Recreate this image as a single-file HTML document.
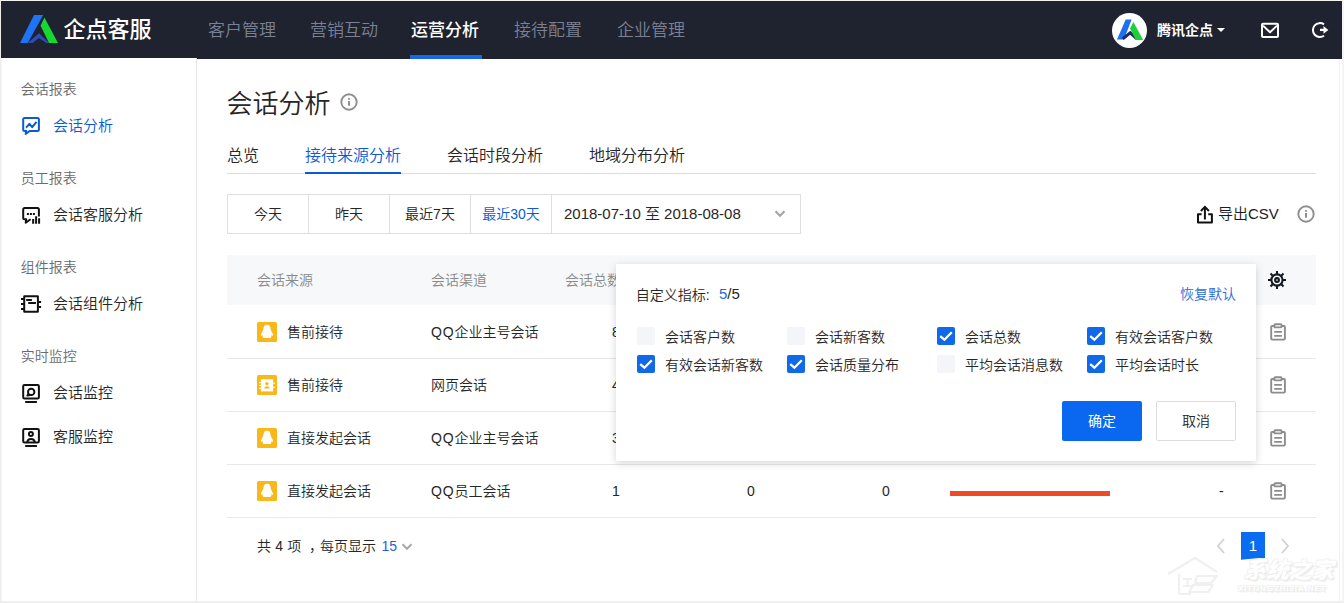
<!DOCTYPE html>
<html lang="zh-CN">
<head>
<meta charset="utf-8">
<title>企点客服 - 会话分析</title>
<style>
*{box-sizing:border-box;margin:0;padding:0}
html,body{width:1344px;height:603px;overflow:hidden;background:#fff}
body{font-family:"Liberation Sans","Noto Sans CJK SC",sans-serif;font-weight:350;color:#333;position:relative;font-size:14px}
.abs{position:absolute;white-space:nowrap}
.t{position:absolute;white-space:nowrap;line-height:20px;height:20px}
#frame{position:absolute;left:0;top:0;width:1344px;height:603px;border-left:1px solid #ececec;border-top:1px solid #f4f4f4;border-bottom:2px solid #efefef;border-right:2px solid #f4f4f4;pointer-events:none;z-index:50}
.wm{position:absolute;white-space:nowrap;color:#fff;font-style:italic;font-weight:900;text-shadow:1px 1px 0 #ebebeb,-1px -1px 0 #f3f3f3,1px -1px 0 #f3f3f3,-1px 1px 0 #efefef,2px 2px 1px #f0f0f0}
#hdr{position:absolute;left:1px;top:1px;width:1341px;height:57.5px;background:#1f2330}
#side{position:absolute;left:1px;top:58px;width:196px;height:543px;border-right:1px solid #e7e7e7;background:#fff}
.nav{position:absolute;top:20px;font-size:17px;line-height:20px;color:#7b8195;white-space:nowrap}
.nav.on{color:#fff;font-weight:500}
.sec{position:absolute;left:19.8px;font-size:14px;color:#6b6b6b;line-height:18px;white-space:nowrap}
.item{position:absolute;left:52px;font-size:15px;color:#262626;line-height:20px;white-space:nowrap}
.item.on{color:#0a5bd3}
.sic{position:absolute;left:21px;width:20px;height:20px}

#main{position:absolute;left:0;top:0;width:1344px;height:603px}
.tab{position:absolute;top:146px;font-size:16px;line-height:20px;color:#262626;white-space:nowrap}
.tab.on{color:#0a5bd3}
.seg{position:absolute;top:194px;height:40px;border:1px solid #dfdfdf;border-left:none;font-size:14px;line-height:38px;text-align:center;color:#262626;white-space:nowrap;background:#fff}
.th{position:absolute;top:270px;font-size:14px;line-height:20px;color:#8a8a8a;white-space:nowrap}
.td{position:absolute;font-size:14px;line-height:20px;color:#262626;white-space:nowrap}
.rl{position:absolute;left:227px;width:1089px;height:1px;background:#e8e8e8}
.qi{position:absolute;left:257px;width:20px;height:20px}
.clip{position:absolute;left:1269px;width:18px;height:20px}
.cb{position:absolute;width:18px;height:18px;border-radius:2px}
.cb.off{background:#f3f5f8}
.cb.onn{background:#0f69e8}
.cl{position:absolute;font-size:14px;line-height:20px;color:#262626;white-space:nowrap}
</style>
</head>
<body>
<div id="hdr">
  <svg class="abs" style="left:0;top:0" width="70" height="57" viewBox="0 0 70 57">
    <polygon points="33,14 42.2,14 26.8,42 19,42" fill="#1f74f5"/>
    <polygon points="26.8,42 38,32.2 48,42 45.5,42 38,37 31.5,42" fill="#2a4dbd"/>
    <polygon points="43.4,16.6 57,42 48,42 39.6,24.7" fill="#17d733"/>
  </svg>
  <div class="abs" style="left:62.5px;top:14px;font-size:22px;line-height:30px;color:#fff;font-weight:500">企点客服</div>
  <div class="nav" style="left:207px">客户管理</div>
  <div class="nav" style="left:309px">营销互动</div>
  <div class="nav on" style="left:410px">运营分析</div>
  <div class="abs" style="left:409.3px;top:54px;width:71.4px;height:3.5px;background:#1268e8"></div>
  <div class="nav" style="left:513px">接待配置</div>
  <div class="nav" style="left:616px">企业管理</div>
  <div class="abs" style="left:1111px;top:12px;width:35px;height:35px;border-radius:50%;background:#fff"></div>
  <svg class="abs" style="left:1111px;top:12px" width="36" height="36" viewBox="0 0 36 36">
    <polygon points="13.7,6.6 19.6,6.6 12,26.4 5,26.4" fill="#1f6ff0"/>
    <path d="M10.8 25.8 L18.2 19.8 L25 26" fill="none" stroke="#1d2c5c" stroke-width="3"/>
    <polygon points="21.4,9 31.2,27 23.8,27 18,15.4" fill="#1fcf3a"/>
  </svg>
  <div class="abs" style="left:1156px;top:19px;font-size:14px;line-height:20px;color:#fff;font-weight:700">腾讯企点</div>
  <div class="abs" style="left:1216px;top:27px;width:0;height:0;border-left:4px solid transparent;border-right:4px solid transparent;border-top:4px solid #fff"></div>
  <svg class="abs" style="left:1259px;top:20px" width="20" height="19" viewBox="0 0 20 19" fill="none" stroke="#fff" stroke-width="2" stroke-linejoin="round"><rect x="2" y="2.7" width="16" height="13.4" rx="1"/><path d="M3 4.6 L10 11.3 L17 4.6"/></svg>
  <svg class="abs" style="left:1309px;top:19px" width="20" height="20" viewBox="0 0 20 20" fill="none" stroke="#fff" stroke-width="2"><path d="M14 4.4 A7 7 0 1 0 14 15.8"/><path d="M10 9.9 H14.5" stroke-width="2.3"/><path d="M13.5 6 L18.3 9.9 L13.5 13.8 Z" fill="#fff" stroke="none"/></svg>
</div>

<div id="side">
  <div class="sec" style="top:22px">会话报表</div>
  <svg class="sic" style="top:58px" viewBox="0 0 20 20" fill="none" stroke="#0a5bd3" stroke-width="2" stroke-linejoin="round" stroke-linecap="round"><path d="M2.7 2 H15.4 Q16.9 2 16.9 3.5 V13.5 Q16.9 15 15.4 15 H7.6 L3.7 18 L4.2 15 H2.7 Q1.2 15 1.2 13.5 V3.5 Q1.2 2 2.7 2 Z"/><path d="M4.1 11.6 L7.4 7.8 L10.2 11.2 L14.5 5.9" stroke-linecap="butt"/></svg>
  <div class="item on" style="top:58px">会话分析</div>

  <div class="sec" style="top:111px">员工报表</div>
  <svg class="sic" style="top:147px" viewBox="0 0 20 20" fill="none" stroke="#111" stroke-width="2" stroke-linejoin="round"><path d="M16.9 11.4 V4.5 Q16.9 3 15.4 3 H2.7 Q1.2 3 1.2 4.5 V12.8 Q1.2 14.3 2.7 14.3 H4.2 L3.7 17.7 L8.6 14.3"/><path d="M4.9 8.9 H6.9 M7.9 8.9 H9.9 M10.9 8.9 H12.9"/><path d="M11.15 18.7 V13.9 M14.1 18.7 V11.2 M17.1 18.7 V13.2"/></svg>
  <div class="item" style="top:147px">会话客服分析</div>

  <div class="sec" style="top:200px">组件报表</div>
  <svg class="sic" style="top:236px;overflow:visible" viewBox="0 0 20 20" fill="none" stroke="#111" stroke-width="2" stroke-linejoin="round"><rect x="2.2" y="2.2" width="13.7" height="15.6" rx="0.3"/><path d="M-1 4.9 H2 M-1 9.9 H2 M-1 14.9 H2 M16 7.9 H19.1 M16 12.9 H19.1 M4.2 5.9 H9.9 M6.2 8.9 H13.9"/></svg>
  <div class="item" style="top:236px">会话组件分析</div>

  <div class="sec" style="top:289px">实时监控</div>
  <svg class="sic" style="top:325px" viewBox="0 0 20 20" fill="none" stroke="#111" stroke-width="2" stroke-linejoin="round"><rect x="1.2" y="2" width="15.7" height="13.6" rx="1.3"/><circle cx="9.2" cy="8.9" r="3.2"/><path d="M6.6 10.8 L5.4 12.6 L8 12"/><path d="M3.2 19 H14.9"/></svg>
  <div class="item" style="top:325px">会话监控</div>
  <svg class="sic" style="top:369px" viewBox="0 0 20 20" fill="none" stroke="#111" stroke-width="2" stroke-linejoin="round"><rect x="1.2" y="2" width="15.7" height="13.6" rx="1.3"/><circle cx="8.9" cy="6.9" r="2"/><path d="M5.2 15.4 C5.6 10.7 12.4 10.7 12.8 15.4"/><path d="M3.2 19 H14.9"/></svg>
  <div class="item" style="top:369px">客服监控</div>
</div>

<div id="main">
  <div class="abs" style="left:226.5px;top:85.5px;font-size:26px;line-height:36px;color:#262626;font-weight:350">会话分析</div>
  <svg class="abs" style="left:340px;top:93px;overflow:visible" width="18" height="18" viewBox="0 0 18 18" fill="none" stroke="#8e8e8e" stroke-width="1.9"><circle cx="9" cy="9" r="7.7"/><path d="M9 7.9 V12.7" stroke-width="2"/><rect x="8" y="5.1" width="2" height="1.6" fill="#8e8e8e" stroke="none"/></svg>

  <div class="tab" style="left:227px">总览</div>
  <div class="tab on" style="left:305px">接待来源分析</div>
  <div class="tab" style="left:447px">会话时段分析</div>
  <div class="tab" style="left:589px">地域分布分析</div>
  <div class="abs" style="left:227px;top:173px;width:1089px;height:1px;background:#dcdcdc"></div>
  <div class="abs" style="left:305px;top:172px;width:96px;height:2px;background:#0a5bd3"></div>

  <div class="seg" style="left:227px;width:82px;border-left:1px solid #dfdfdf">今天</div>
  <div class="seg" style="left:309px;width:81px">昨天</div>
  <div class="seg" style="left:390px;width:81px">最近7天</div>
  <div class="seg" style="left:471px;width:81px;color:#0a5bd3">最近30天</div>
  <div class="seg" style="left:552px;width:249px;text-align:left;padding-left:12px;font-size:15px">2018-07-10 至 2018-08-08</div>
  <svg class="abs" style="left:773px;top:209px" width="14" height="10" viewBox="0 0 14 10" fill="none" stroke="#a4a4a4" stroke-width="2"><path d="M2.5 2.3 L7 6.8 L11.5 2.3"/></svg>

  <svg class="abs" style="left:1196px;top:205px" width="18" height="20" viewBox="0 0 18 20" fill="none" stroke="#111" stroke-width="2" stroke-linejoin="round"><path d="M5.6 9.2 H2 V17.6 H15.9 V9.2 H12.2"/><path d="M8.9 14.5 V2.2" stroke-linejoin="miter"/><path d="M4.9 6 L8.9 1.9 L12.9 6" stroke-linejoin="miter"/></svg>
  <div class="abs" style="left:1218px;top:204px;font-size:15px;line-height:20px;color:#1a1a1a">导出CSV</div>
  <svg class="abs" style="left:1297px;top:205px;overflow:visible" width="18" height="18" viewBox="0 0 18 18" fill="none" stroke="#8e8e8e" stroke-width="1.9"><circle cx="9" cy="9" r="7.7"/><path d="M9 7.9 V12.7" stroke-width="2"/><rect x="8" y="5.1" width="2" height="1.6" fill="#8e8e8e" stroke="none"/></svg>

  <div class="abs" style="left:227px;top:254.6px;width:1089px;height:50.6px;background:#f6f8fa"></div>
  <div class="th" style="left:257px">会话来源</div>
  <div class="th" style="left:431px">会话渠道</div>
  <div class="th" style="left:565px">会话总数</div>
  <svg class="abs" style="left:1267px;top:270px" width="20" height="20" viewBox="0 0 20 20" fill="none" stroke="#141821"><circle cx="10" cy="10" r="5.6" stroke-width="2.1"/><circle cx="10" cy="10" r="1.9" stroke-width="2.1"/><path d="M10 1 V4.5 M10 15.5 V19 M1 10 H4.5 M15.5 10 H19 M3.5 3.5 L6 6 M14 14 L16.5 16.5 M3.5 16.5 L6 14 M14 6 L16.5 3.5" stroke-width="2"/></svg>

  <div class="rl" style="top:358px"></div>
  <div class="rl" style="top:411px"></div>
  <div class="rl" style="top:464px"></div>
  <div class="rl" style="top:517px"></div>

  <svg class="qi" style="top:322px" viewBox="0 0 20 20"><rect width="20" height="20" rx="1.5" fill="#f8b819"/><path d="M10 2.7 C12.7 2.7 13.5 4.8 13.6 7 C13.8 9.2 16.1 11.2 16.1 13.2 C16.1 14 15.2 13.8 14.5 13 C14.5 14.2 14.2 15.2 13.6 16 H6.4 C5.8 15.2 5.5 14.2 5.5 13 C4.8 13.8 3.9 14 3.9 13.2 C3.9 11.2 6.2 9.2 6.4 7 C6.5 4.8 7.3 2.7 10 2.7 Z" fill="#fff"/></svg><div class="td" style="left:287px;top:322px">售前接待</div><div class="td" style="left:431px;top:322px"><span style="letter-spacing:0.9px">QQ</span>企业主号会话</div><div class="td" style="left:612px;top:322px">8</div>
  <svg class="qi" style="top:375px" viewBox="0 0 20 20"><rect width="20" height="20" rx="1.5" fill="#f8b819"/><rect x="3.9" y="4.2" width="12.2" height="12.2" fill="#fff"/><path d="M2 7.7 H4 M2 10.5 H4 M2 13.4 H4 M16 8.2 H18 M16 12.3 H18" stroke="#fff" stroke-width="1"/><circle cx="9.9" cy="8.6" r="1.7" fill="#f8b819"/><path d="M7.2 13.5 C7.4 10.6 12.4 10.6 12.6 13.5 Z" fill="#f8b819"/></svg><div class="td" style="left:287px;top:375px">售前接待</div><div class="td" style="left:431px;top:375px">网页会话</div><div class="td" style="left:612px;top:375px">4</div>
  <svg class="qi" style="top:428px" viewBox="0 0 20 20"><rect width="20" height="20" rx="1.5" fill="#f8b819"/><path d="M10 2.7 C12.7 2.7 13.5 4.8 13.6 7 C13.8 9.2 16.1 11.2 16.1 13.2 C16.1 14 15.2 13.8 14.5 13 C14.5 14.2 14.2 15.2 13.6 16 H6.4 C5.8 15.2 5.5 14.2 5.5 13 C4.8 13.8 3.9 14 3.9 13.2 C3.9 11.2 6.2 9.2 6.4 7 C6.5 4.8 7.3 2.7 10 2.7 Z" fill="#fff"/></svg><div class="td" style="left:287px;top:428px">直接发起会话</div><div class="td" style="left:431px;top:428px"><span style="letter-spacing:0.9px">QQ</span>企业主号会话</div><div class="td" style="left:612px;top:428px">3</div>
  <svg class="qi" style="top:481px" viewBox="0 0 20 20"><rect width="20" height="20" rx="1.5" fill="#f8b819"/><path d="M10 2.7 C12.7 2.7 13.5 4.8 13.6 7 C13.8 9.2 16.1 11.2 16.1 13.2 C16.1 14 15.2 13.8 14.5 13 C14.5 14.2 14.2 15.2 13.6 16 H6.4 C5.8 15.2 5.5 14.2 5.5 13 C4.8 13.8 3.9 14 3.9 13.2 C3.9 11.2 6.2 9.2 6.4 7 C6.5 4.8 7.3 2.7 10 2.7 Z" fill="#fff"/></svg><div class="td" style="left:287px;top:481px">直接发起会话</div><div class="td" style="left:431px;top:481px"><span style="letter-spacing:0.9px">QQ</span>员工会话</div><div class="td" style="left:612px;top:481px">1</div>
  <div class="td" style="left:747px;top:481px">0</div>
  <div class="td" style="left:882px;top:481px">0</div>
  <div class="abs" style="left:950px;top:490.7px;width:160px;height:5px;background:#f04a24"></div>
  <div class="td" style="left:1219px;top:481px">-</div>

  <svg class="clip" style="top:322px" viewBox="0 0 18 20" fill="none" stroke="#8c8c8c" stroke-width="1.9" stroke-linejoin="round"><path d="M5.4 4 H3.2 Q2.2 4 2.2 5 V16.6 Q2.2 17.6 3.2 17.6 H14.9 Q15.9 17.6 15.9 16.6 V5 Q15.9 4 14.9 4 H12.6"/><rect x="5.4" y="2.2" width="7.2" height="3.2" rx="1"/><path d="M5.2 9.9 H12.9 M5.2 13.9 H12.9"/></svg>
  <svg class="clip" style="top:375px" viewBox="0 0 18 20" fill="none" stroke="#8c8c8c" stroke-width="1.9" stroke-linejoin="round"><path d="M5.4 4 H3.2 Q2.2 4 2.2 5 V16.6 Q2.2 17.6 3.2 17.6 H14.9 Q15.9 17.6 15.9 16.6 V5 Q15.9 4 14.9 4 H12.6"/><rect x="5.4" y="2.2" width="7.2" height="3.2" rx="1"/><path d="M5.2 9.9 H12.9 M5.2 13.9 H12.9"/></svg>
  <svg class="clip" style="top:428px" viewBox="0 0 18 20" fill="none" stroke="#8c8c8c" stroke-width="1.9" stroke-linejoin="round"><path d="M5.4 4 H3.2 Q2.2 4 2.2 5 V16.6 Q2.2 17.6 3.2 17.6 H14.9 Q15.9 17.6 15.9 16.6 V5 Q15.9 4 14.9 4 H12.6"/><rect x="5.4" y="2.2" width="7.2" height="3.2" rx="1"/><path d="M5.2 9.9 H12.9 M5.2 13.9 H12.9"/></svg>
  <svg class="clip" style="top:481px" viewBox="0 0 18 20" fill="none" stroke="#8c8c8c" stroke-width="1.9" stroke-linejoin="round"><path d="M5.4 4 H3.2 Q2.2 4 2.2 5 V16.6 Q2.2 17.6 3.2 17.6 H14.9 Q15.9 17.6 15.9 16.6 V5 Q15.9 4 14.9 4 H12.6"/><rect x="5.4" y="2.2" width="7.2" height="3.2" rx="1"/><path d="M5.2 9.9 H12.9 M5.2 13.9 H12.9"/></svg>

  <div class="td" style="left:257px;top:536px;word-spacing:0.4px">共 4 项</div><div class="td" style="left:309px;top:536px">，</div><div class="td" style="left:320px;top:536px">每页显示</div><div class="td" style="left:381.5px;top:536px;color:#1f62d6">15</div>
  <svg class="abs" style="left:400px;top:542px" width="14" height="10" viewBox="0 0 14 10" fill="none" stroke="#a8a8a8" stroke-width="2"><path d="M2.5 2.3 L7 6.8 L11.5 2.3"/></svg>

  <svg class="abs" style="left:1215px;top:537px" width="12" height="18" viewBox="0 0 12 18" fill="none" stroke="#d0d0d8" stroke-width="1.8"><path d="M9 2 L3 9 L9 16"/></svg>
  <div class="abs" style="left:1241px;top:532px;width:24px;height:28px;background:#0a6cf0;color:#fff;font-size:15px;line-height:28px;text-align:center">1</div>
  <svg class="abs" style="left:1279px;top:537px" width="12" height="18" viewBox="0 0 12 18" fill="none" stroke="#d0d0d8" stroke-width="1.8"><path d="M3 2 L9 9 L3 16"/></svg>

  <div id="pop" class="abs" style="left:616px;top:264px;width:640px;height:197px;background:#fff;box-shadow:0 2px 8px rgba(0,0,0,.17)"></div>
  <div class="cl" style="left:635.8px;top:284.5px">自定义指标:</div>
  <div class="cl" style="left:719px;top:284px;font-size:15px"><span style="color:#1f6ae0">5</span>/5</div>
  <div class="cl" style="left:1180px;top:284px;color:#2a6bd8;font-size:14px">恢复默认</div>

  <div class="cb off" style="left:637px;top:327px"></div><div class="cl" style="left:665px;top:327px">会话客户数</div>
  <div class="cb off" style="left:787px;top:327px"></div><div class="cl" style="left:815px;top:327px">会话新客数</div>
  <svg class="cb onn" viewBox="0 0 18 18" style="left:937px;top:327px"><path d="M3.2 9.2 L7.4 12.7 L14.8 5.3" fill="none" stroke="#fff" stroke-width="2.3"/></svg><div class="cl" style="left:965px;top:327px">会话总数</div>
  <svg class="cb onn" viewBox="0 0 18 18" style="left:1087px;top:327px"><path d="M3.2 9.2 L7.4 12.7 L14.8 5.3" fill="none" stroke="#fff" stroke-width="2.3"/></svg><div class="cl" style="left:1115px;top:327px">有效会话客户数</div>
  <svg class="cb onn" viewBox="0 0 18 18" style="left:637px;top:355px"><path d="M3.2 9.2 L7.4 12.7 L14.8 5.3" fill="none" stroke="#fff" stroke-width="2.3"/></svg><div class="cl" style="left:665px;top:355px">有效会话新客数</div>
  <svg class="cb onn" viewBox="0 0 18 18" style="left:787px;top:355px"><path d="M3.2 9.2 L7.4 12.7 L14.8 5.3" fill="none" stroke="#fff" stroke-width="2.3"/></svg><div class="cl" style="left:815px;top:355px">会话质量分布</div>
  <div class="cb off" style="left:937px;top:355px"></div><div class="cl" style="left:965px;top:355px">平均会话消息数</div>
  <svg class="cb onn" viewBox="0 0 18 18" style="left:1087px;top:355px"><path d="M3.2 9.2 L7.4 12.7 L14.8 5.3" fill="none" stroke="#fff" stroke-width="2.3"/></svg><div class="cl" style="left:1115px;top:355px">平均会话时长</div>

  <div class="abs" style="left:1062px;top:401px;width:80px;height:40px;background:#0a68f0;border-radius:2px;color:#fff;font-size:14px;font-weight:400;line-height:40px;text-align:center">确定</div>
  <div class="abs" style="left:1156px;top:401px;width:80px;height:40px;background:#fff;border:1px solid #ddd;border-radius:2px;color:#262626;font-size:14px;line-height:38px;text-align:center">取消</div>
  <div class="abs" style="left:1px;top:59px;width:1px;height:542px;background:#f7f7f7"></div>
  <div class="abs" style="left:1339px;top:59px;width:1px;height:542px;background:#f4f4f4"></div>
  <svg class="abs" style="left:1165px;top:552px" width="80" height="48" viewBox="0 0 80 48" fill="none" stroke="#f0f0f0" stroke-width="2.2" stroke-linejoin="round"><path d="M3 22 L30 6 L52 20"/><path d="M14 22 V42 H26"/><path d="M18 27 H27 M18 34 H27 M22.5 27 V34"/><path d="M32 24 H52 L46 31 H30 Z M28 33 H48 L43 40 H24 Z"/></svg>
  <svg class="abs" style="left:1241px;top:556px" width="24" height="4" viewBox="0 0 24 4"><path d="M0 4 L0 3.7 L18 2 L21 2.2 L22.5 3.6 L24 4 Z" fill="#fff"/></svg>
  <div class="wm" style="left:1244px;top:556px;font-size:22px;line-height:30px;letter-spacing:0.5px">系统之家</div>
  <div class="wm" style="left:1238px;top:584px;font-size:8px;line-height:10px;font-weight:700;letter-spacing:0.9px;font-style:normal">XITONGZHIJIA.NET</div>
</div>
<div id="frame"></div>
</body>
</html>
